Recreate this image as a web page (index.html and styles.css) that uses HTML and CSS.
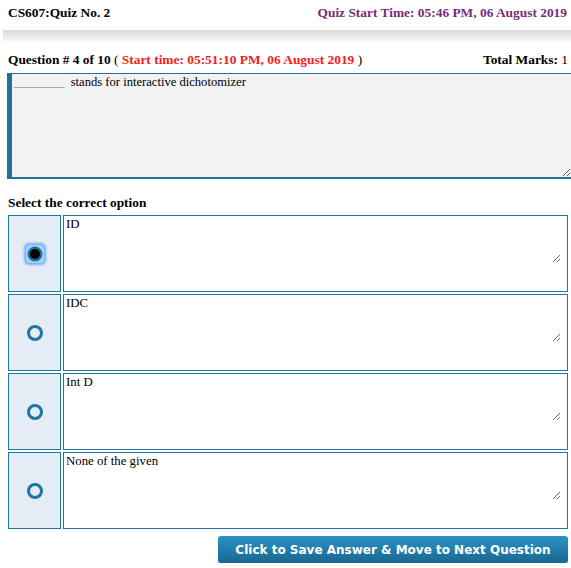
FILE: index.html
```html
<!DOCTYPE html>
<html>
<head>
<meta charset="utf-8">
<link rel="stylesheet" href="styles.css">
</head>
<body>
<div class="header">
  <span class="course">CS607:Quiz No. 2</span>
  <span class="quiz-start">Quiz Start Time: 05:46 PM, 06 August 2019</span>
</div>
<div class="shadow"></div>
<div class="qline">
  <span><b>Question # 4 of 10</b> ( <b class="red">Start time: 05:51:10 PM, 06 August 2019</b> )</span>
  <span><b>Total Marks:</b> 1</span>
</div>
<div class="qbox">
  <div class="qtext"><span class="blank">________</span> &nbsp;stands for interactive dichotomizer</div>
  <textarea class="qarea" readonly></textarea>
</div>
<div class="select-label">Select the correct option</div>
<div class="options">
  <div class="radio-cell">
    <svg width="26" height="26" viewBox="0 0 26 26">
      <defs>
        <filter id="g" x="-30%" y="-30%" width="160%" height="160%"><feGaussianBlur stdDeviation="1.2"/></filter>
      </defs>
      <rect x="2" y="2" width="22" height="22" rx="5" fill="#6fb2f2" filter="url(#g)"/>
      <rect x="4" y="4" width="18" height="18" rx="4" fill="#a9d3fb"/>
      <circle cx="13" cy="13" r="7.5" fill="#1b6f96"/>
      <circle cx="13" cy="13" r="5" fill="#000"/>
    </svg>
  </div>
  <div class="answer-cell"><textarea readonly>ID</textarea></div>

  <div class="radio-cell"><span class="ring"></span></div>
  <div class="answer-cell"><textarea readonly>IDC</textarea></div>

  <div class="radio-cell"><span class="ring"></span></div>
  <div class="answer-cell"><textarea readonly>Int D</textarea></div>

  <div class="radio-cell"><span class="ring"></span></div>
  <div class="answer-cell"><textarea readonly>None of the given</textarea></div>
</div>
<div class="actions">
  <button class="next-btn">Click to Save Answer &amp; Move to Next Question</button>
</div>
</body>
</html>
```
FILE: styles.css
```css
html, body {
  margin: 0;
  padding: 0;
  background: #fff;
  width: 571px;
  overflow: hidden;
}
body {
  font-family: "Liberation Serif", "Times New Roman", serif;
  font-size: 13px;
  color: #000;
}
.header {
  display: flex;
  justify-content: space-between;
  align-items: center;
  height: 26px;
  padding: 0 4px 0 8px;
  font-weight: bold;
  font-size: 13.4px;
}
.quiz-start {
  color: #7a2a7c;
}
.shadow {
  margin-top: 4px;
  margin-left: 3px;
  height: 12px;
  background: linear-gradient(#d9d9d9, #fafafa);
}
.qline {
  display: flex;
  justify-content: space-between;
  align-items: center;
  padding: 9px 3px 0 8px;
  height: 18px;
  font-size: 13.4px;
}
.red {
  color: #f52020;
}
.qbox {
  position: relative;
  margin: 4px 0 0 7px;
  border-left: 5px solid #1e7399;
  border-top: 1px solid #1e7399;
  border-bottom: 2px solid #1e7399;
  height: 103px;
  background: #f2f2f2;
}
.qtext {
  position: absolute;
  left: 2px;
  top: 1px;
  font-size: 12.6px;
  pointer-events: none;
}
.blank {
  color: #888;
}
.qarea {
  display: block;
  width: 100%;
  height: 100%;
  box-sizing: border-box;
  border: none;
  background: transparent;
  font-family: inherit;
  font-size: 13px;
  outline: none;
}
.select-label {
  font-weight: bold;
  font-size: 13.4px;
  padding: 16px 0 0 8px;
  height: 20px;
}
.options {
  display: grid;
  grid-template-columns: 53px 505px;
  grid-auto-rows: 77px;
  column-gap: 2px;
  row-gap: 2px;
  margin: 0 0 0 8px;
}
.radio-cell {
  background: #e4ecf6;
  border: 1px solid #1e77a0;
  display: flex;
  align-items: center;
  justify-content: center;
}
.ring {
  width: 10px;
  height: 10px;
  border: 3px solid #1e77a0;
  border-radius: 50%;
}
.answer-cell {
  border: 1px solid #1e77a0;
  background: #fff;
  padding: 0 6px 28px 0;
}
.answer-cell textarea {
  display: block;
  width: 100%;
  height: 100%;
  box-sizing: border-box;
  border: none;
  padding: 1px 2px 0;
  font-family: "Liberation Serif", "Times New Roman", serif;
  font-size: 12.8px;
  color: #000;
  background: #fff;
  outline: none;
}
.actions {
  display: flex;
  justify-content: flex-end;
  padding: 7px 3px 0 0;
}
.next-btn {
  width: 350px;
  height: 27px;
  border: none;
  border-radius: 3px;
  background: linear-gradient(#2a93c6, #1b6791);
  color: #fff;
  font-family: "DejaVu Sans", Verdana, sans-serif;
  font-weight: bold;
  font-size: 12px;
  box-shadow: 0 1px 1px rgba(0,0,0,0.3);
}
```
